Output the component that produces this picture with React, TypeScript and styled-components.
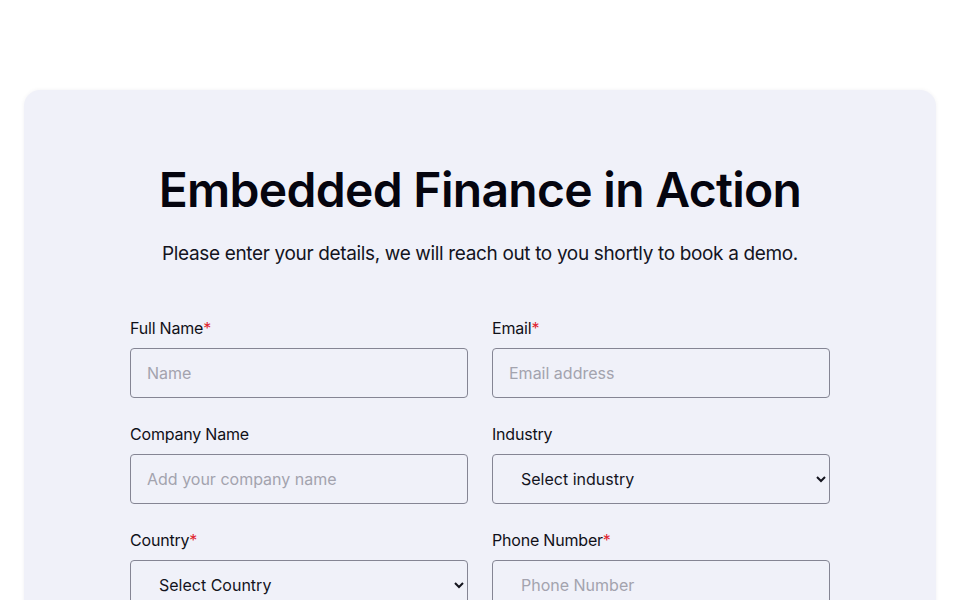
import styled, { createGlobalStyle } from "styled-components";

const GlobalStyle = createGlobalStyle`
  * { box-sizing: border-box; }
  body {
    margin: 0;
    background: #ffffff;
    font-family: "Inter", "Open Sans", sans-serif;
    color: #0b0b14;
  }
`;

type Field = {
  label: string;
  required?: boolean;
  kind: "input" | "select";
  placeholder: string;
};

const fields: Field[] = [
  { label: "Full Name", required: true, kind: "input", placeholder: "Name" },
  { label: "Email", required: true, kind: "input", placeholder: "Email address" },
  { label: "Company Name", kind: "input", placeholder: "Add your company name" },
  { label: "Industry", kind: "select", placeholder: "Select industry" },
  { label: "Country", required: true, kind: "select", placeholder: "Select Country" },
  { label: "Phone Number", required: true, kind: "input", placeholder: "Phone Number" },
];

export default function App() {
  return (
    <>
      <GlobalStyle />
      <Page>
        <Card>
          <Title>Embedded Finance in Action</Title>
          <Subtitle>
            Please enter your details, we will reach out to you shortly to book a demo.
          </Subtitle>
          <FormGrid>
            {fields.map((f) => (
              <FieldWrap key={f.label}>
                <Label>
                  {f.label}
                  {f.required && <Star>*</Star>}
                </Label>
                {f.kind === "input" ? (
                  <TextInput
                    placeholder={f.placeholder}
                    $indent={f.label === "Phone Number"}
                  />
                ) : (
                  <Select defaultValue="">
                    <option value="">{f.placeholder}</option>
                  </Select>
                )}
              </FieldWrap>
            ))}
          </FormGrid>
        </Card>
      </Page>
    </>
  );
}

const Page = styled.main`
  padding: 90px 24px 40px;
  min-height: 100vh;
`;

const Card = styled.section`
  background: #f0f1f9;
  border-radius: 16px;
  box-shadow: 0 0 4px rgba(20, 20, 60, 0.06);
  padding: 70px 24px 60px;
  display: flex;
  flex-direction: column;
  align-items: center;
`;

const Title = styled.h1`
  margin: 0;
  font-size: 48px;
  font-weight: 600;
  letter-spacing: -0.7px;
  line-height: 60px;
  color: #05050f;
`;

const Subtitle = styled.p`
  margin: 22px 0 0;
  font-size: 19px;
  font-weight: 400;
  line-height: 24px;
  color: #14141e;
  letter-spacing: -0.35px;
`;

const FormGrid = styled.form`
  margin-top: 52px;
  width: 700px;
  display: grid;
  grid-template-columns: 338px 338px;
  column-gap: 24px;
  row-gap: 26px;
`;

const FieldWrap = styled.div`
  display: flex;
  flex-direction: column;
  gap: 9px;
`;

const Label = styled.label`
  font-size: 16px;
  line-height: 21px;
  color: #101018;
  letter-spacing: -0.2px;
`;

const Star = styled.span`
  color: #e0242f;
`;

const TextInput = styled.input<{ $indent?: boolean }>`
  height: 50px;
  width: 100%;
  border: 1px solid #858594;
  border-radius: 4px;
  background: transparent;
  padding: 0 16px 0 ${(p) => (p.$indent ? "28px" : "16px")};
  font-family: inherit;
  font-size: 16px;
  color: #101018;
  outline: none;
  &::placeholder {
    color: #a3a3ae;
  }
`;

const Select = styled.select`
  height: 50px;
  width: 100%;
  border: 1px solid #858594;
  border-radius: 4px;
  background: transparent;
  padding: 0 4px 0 24px;
  font-family: inherit;
  font-size: 16px;
  color: #14141e;
  outline: none;
`;
